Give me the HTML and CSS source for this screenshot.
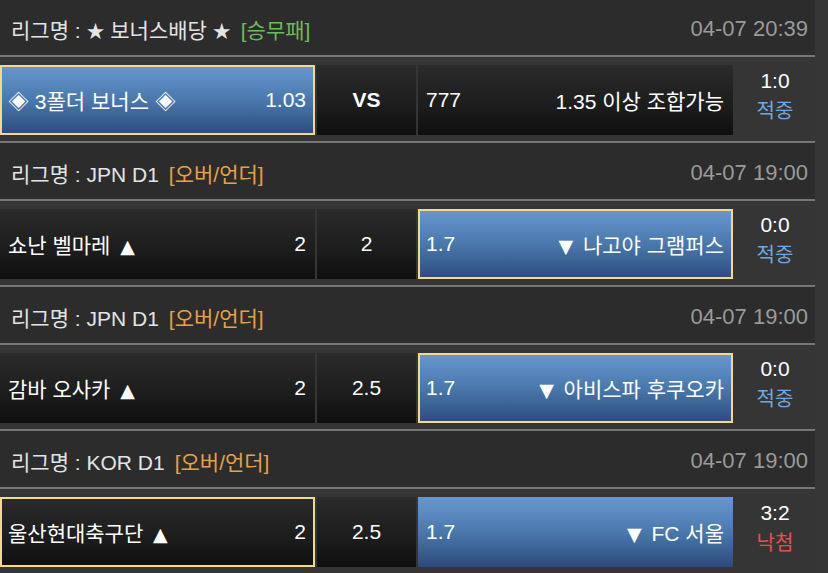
FILE: index.html
```html
<!DOCTYPE html>
<html lang="ko">
<head>
<meta charset="utf-8">
<title>Bet list</title>
<link rel="stylesheet" href="styles.css">
</head>
<body>
<div class="list">
  <section class="game">
    <div class="league"><span class="name">리그명 : <span class="star">★</span> 보너스배당 <span class="star">★</span><span class="tag tag-green">[승무패]</span></span><span class="time">04-07 20:39</span></div>
    <div class="row">
      <div class="cell blue selected"><span>◈ 3폴더 보너스 ◈</span><span>1.03</span></div>
      <div class="cell mid dark"><b>VS</b></div>
      <div class="cell dark"><span>777</span><span>1.35 이상 조합가능</span></div>
      <div class="score"><span>1:0</span><span class="win">적중</span></div>
    </div>
  </section>
  <section class="game">
    <div class="league"><span class="name">리그명 : JPN D1<span class="tag tag-orange">[오버/언더]</span></span><span class="time">04-07 19:00</span></div>
    <div class="row">
      <div class="cell dark"><span>쇼난 벨마레 <span class="arrow">▲</span></span><span>2</span></div>
      <div class="cell mid dark"><span>2</span></div>
      <div class="cell blue selected"><span>1.7</span><span><span class="arrow">▼</span> 나고야 그램퍼스</span></div>
      <div class="score"><span>0:0</span><span class="win">적중</span></div>
    </div>
  </section>
  <section class="game">
    <div class="league"><span class="name">리그명 : JPN D1<span class="tag tag-orange">[오버/언더]</span></span><span class="time">04-07 19:00</span></div>
    <div class="row">
      <div class="cell dark"><span>감바 오사카 <span class="arrow">▲</span></span><span>2</span></div>
      <div class="cell mid dark"><span>2.5</span></div>
      <div class="cell blue selected"><span>1.7</span><span><span class="arrow">▼</span> 아비스파 후쿠오카</span></div>
      <div class="score"><span>0:0</span><span class="win">적중</span></div>
    </div>
  </section>
  <section class="game">
    <div class="league"><span class="name">리그명 : KOR D1<span class="tag tag-orange">[오버/언더]</span></span><span class="time">04-07 19:00</span></div>
    <div class="row">
      <div class="cell dark selected"><span>울산현대축구단 <span class="arrow">▲</span></span><span>2</span></div>
      <div class="cell mid dark"><span>2.5</span></div>
      <div class="cell blue"><span>1.7</span><span><span class="arrow">▼</span> FC 서울</span></div>
      <div class="score"><span>3:2</span><span class="lose">낙첨</span></div>
    </div>
  </section>
</div>
</body>
</html>
```
FILE: styles.css
```css
html, body {
  margin: 0;
  padding: 0;
}
body {
  background: #363636;
  font-family: "Liberation Sans", "Noto Sans CJK KR", sans-serif;
  color: #fff;
  overflow: hidden;
}
.list {
  width: 815px;
  margin-top: -3px;
}
.league {
  box-sizing: border-box;
  height: 60px;
  border-top: 2px solid #777;
  border-bottom: 2px solid #777;
  background: #2c2c2c;
  display: flex;
  justify-content: space-between;
  align-items: center;
  padding: 4px 7px 0 11px;
  font-size: 21px;
  white-space: nowrap;
}
.name {
  color: #e4e4e4;
}
.star {
  font-size: 18px;
}
.tag {
  margin-left: 10px;
}
.tag-green {
  color: #6cbb5a;
}
.tag-orange {
  color: #e8a045;
}
.time {
  color: #9a9a9a;
  font-size: 22px;
}
.row {
  box-sizing: border-box;
  height: 84px;
  padding-top: 8px;
  display: grid;
  grid-template-columns: 315px 99px 315px 1fr;
  column-gap: 2px;
  align-items: start;
  background: #353535;
}
.cell {
  box-sizing: border-box;
  height: 70px;
  display: flex;
  justify-content: space-between;
  align-items: center;
  padding: 0 9px 0 8px;
  font-size: 21px;
  white-space: nowrap;
}
.arrow {
  font-family: "DejaVu Sans", sans-serif;
  font-size: 19px;
  margin: 0 4px;
}
.dark {
  background: linear-gradient(to bottom, #2b2b2b 0%, #1c1c1c 60%, #0f0f0f 100%);
}
.blue {
  background: linear-gradient(to bottom, #6699d0 0%, #4a78ad 50%, #2b4b7b 100%);
}
.selected {
  box-shadow: inset 0 0 0 2px #f3d98a;
}
.mid {
  justify-content: center;
  padding: 0;
}
.mid b {
  font-weight: bold;
  font-size: 21px;
}
.score {
  box-sizing: border-box;
  height: 70px;
  padding-bottom: 9px;
  display: flex;
  flex-direction: column;
  justify-content: center;
  align-items: center;
  font-size: 21px;
  line-height: 31px;
}
.win {
  color: #6ea8e0;
  font-size: 20px;
}
.lose {
  color: #e25252;
  font-size: 20px;
}
```
